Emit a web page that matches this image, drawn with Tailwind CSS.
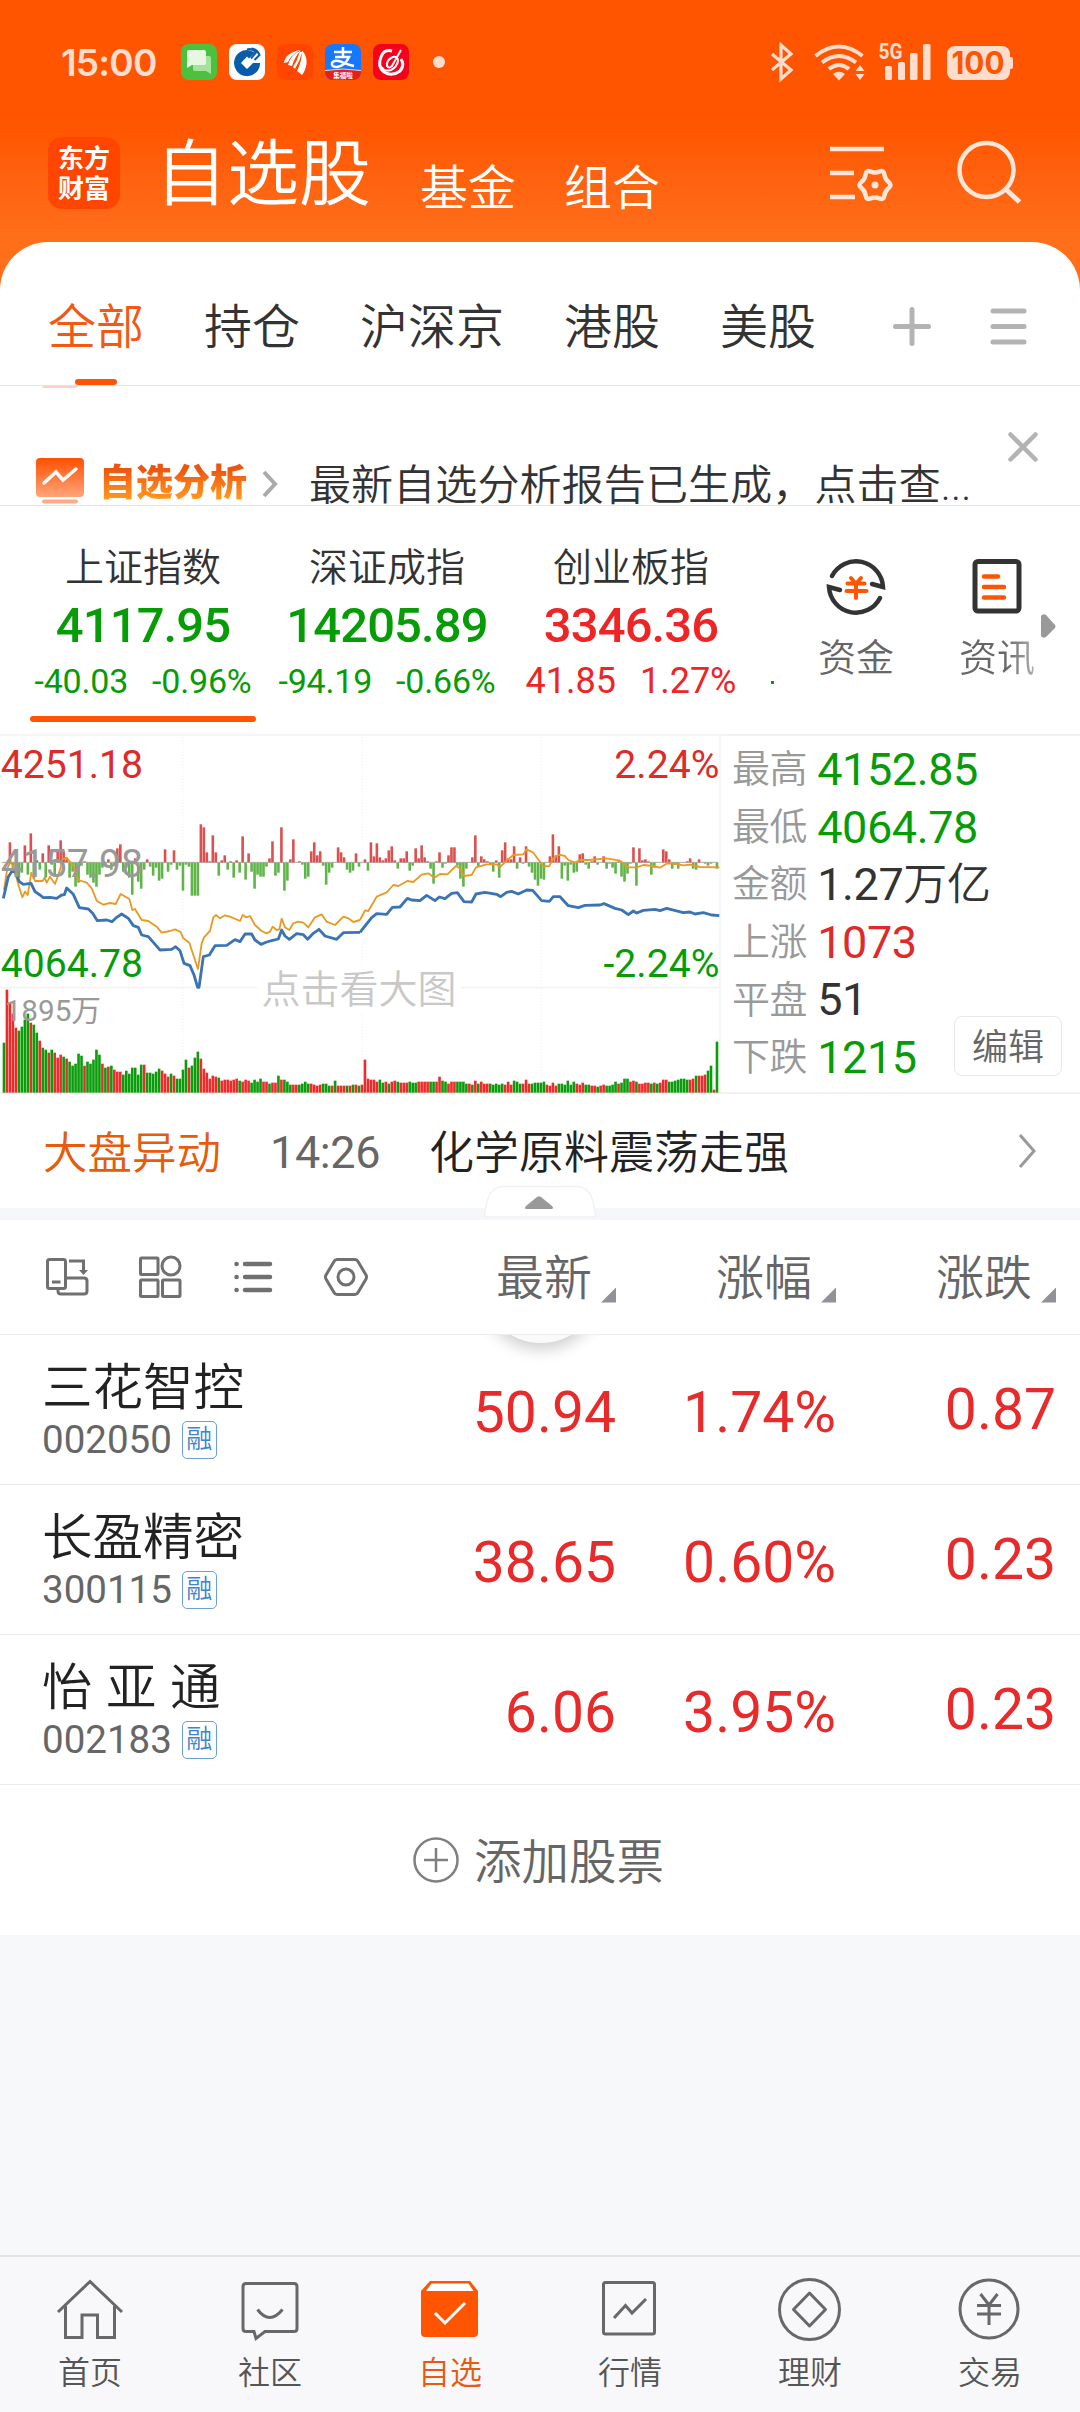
<!DOCTYPE html>
<html lang="zh-CN">
  <head>
    <meta charset="utf-8" />
    <meta name="viewport" content="width=device-width, initial-scale=1" />
    <title>自选股</title>
    <script src="https://cdn.jsdelivr.net/npm/@tailwindcss/browser@4"></script>
  </head>
  <body class="bg-[#f7f8fa]">
    <div
      class="flex h-[2412px] w-[1080px] flex-col overflow-hidden font-[Roboto,'Noto_Sans_CJK_SC',sans-serif] text-[#333]"
    >
      <!-- Header -->
      <header
        class="h-[290px] shrink-0 bg-linear-to-b from-[#ff5500] from-[125px] to-[#ff6f1a] to-[240px]"
      >
        <!-- Status bar -->
        <div class="flex h-[124px] items-center pl-[61px] text-[#ffddcc]">
          <span
            class="w-[120px] font-[Inter,sans-serif] text-[37px] leading-none font-semibold tracking-[-0.8px]"
            >15:00</span
          >
          <div class="flex items-center gap-3">
            <svg class="size-9" viewBox="0 0 36 36">
              <rect width="36" height="36" rx="8" fill="#4cc13f" />
              <path d="M12 12h16a2 2 0 0 1 2 2v16l-5-3H14a2 2 0 0 1-2-2z" fill="#a5e39b" />
              <path d="M8 6h15a2 2 0 0 1 2 2v11a2 2 0 0 1-2 2H11l-5 3V8a2 2 0 0 1 2-2z" fill="#e6f8e2" />
            </svg>
            <svg class="size-9" viewBox="0 0 36 36">
              <rect width="36" height="36" rx="8" fill="#fff" />
              <path d="M21 6.500A13 13 0 1 0 31 19h-7l-6 6-6-6 6-6.500 2 2 6-6z" fill="#0a5cab" />
              <path d="M18 5.500q6-1.500 9 3l-5 6M22.500 4.500q6 1 8 6.500l-5 5" fill="none" stroke="#0a5cab" stroke-width="2" />
            </svg>
            <svg class="size-9" viewBox="0 0 36 36">
              <rect width="36" height="36" rx="8" fill="#ff4500" />
              <path
                d="M7 19Q8 9 23 6Q14 11 11 18zM11 21Q14 10 24 6.500Q18 12 15 22zM20 27Q25 17 25 6.500Q33 15 27 28l-2 3z"
                fill="#fff"
              />
              <path d="M17 24Q22 16 24 8" fill="none" stroke="#fff" stroke-width="2.500" />
            </svg>
            <svg class="size-9" viewBox="0 0 36 36">
              <rect width="36" height="36" rx="8" fill="#1677ff" />
              <path d="M0 27q18-4 36 0v1a8 8 0 0 1-8 8H8a8 8 0 0 1-8-8z" fill="#e3201b" />
              <path d="M0 26.500q18-3 36 0" fill="none" stroke="#ffd9a8" />
              <path d="M9 8h18M18 3v10M10 13h14Q20 22 12 23q-6 0-5-4 2-4 10-1 6 3 12 4" fill="none" stroke="#fff" stroke-width="2.500" />
              <text x="18" y="34" font-size="6.500" font-weight="700" text-anchor="middle" fill="#fff">集福啦</text>
            </svg>
            <svg class="size-9" viewBox="0 0 36 36">
              <rect width="36" height="36" rx="8" fill="#f5001d" />
              <path d="M19 7Q11 5 8 13q-4 9 3 15 8 5 16-1 5-6 1-12" fill="none" stroke="#fff" stroke-width="3" />
              <path d="M28 6 19 22q-3 3-5 0-1-6 6-9 5-1 5 4-1 6-7 9-7 2-9-3" fill="none" stroke="#fff" stroke-width="2" />
            </svg>
          </div>
          <span class="ml-6 size-3 rounded-full bg-[#ffddcc]"></span>
          <svg class="ml-[321px] h-[48px] w-[250px]" viewBox="766 38 250 48" fill="#ffddcc">
            <path d="m772 54 19 16-10 9V45l10 9-19 16" fill="none" stroke="#ffddcc" stroke-width="3.200" />
            <g fill="none" stroke="#ffddcc" stroke-width="4">
              <path d="M815.500 56q23.500-19 47 0M822 62.500q17-13 34 0M829 69q10-8 20 0" />
            </g>
            <path d="M833 74q6-4.500 12 0l-6 6.500zM855.500 71l4.500-6 4.500 6zM855.500 74l4.500 6 4.500-6z" />
            <text x="878.500" y="59" font-family="Roboto" font-size="21.500" font-weight="700" textLength="24" lengthAdjust="spacingAndGlyphs">5G</text>
            <rect x="885" y="66" width="7" height="14" rx="1.500" />
            <rect x="898" y="62" width="7" height="18" rx="1.500" />
            <rect x="910" y="53" width="7.500" height="27" rx="1.500" />
            <rect x="923" y="44" width="7.500" height="36" rx="1.500" />
            <rect x="947" y="46" width="63" height="34" rx="8" />
            <rect x="1005" y="57" width="8" height="12" rx="2" />
            <text x="978" y="74" font-family="Inter" font-size="31" font-weight="700" text-anchor="middle" textLength="53" lengthAdjust="spacingAndGlyphs" fill="#ff5500">100</text>
          </svg>
        </div>
        <!-- App title -->
        <div class="flex h-[98px] items-center pl-12 text-white">
          <div
            class="grid size-[72px] place-content-center rounded-[14px] bg-[#ff4600] pt-[2px] text-center text-[26px] leading-[30px] font-bold"
          >
            <span>东方</span><span>财富</span>
          </div>
          <span class="mt-[4px] ml-[35px] text-[72px] leading-[98px] font-[350]">自选股</span>
          <span class="mt-[31px] ml-[49px] text-[48px] leading-[72px] font-[350]">基金</span>
          <span class="mt-[31px] ml-[48px] text-[48px] leading-[72px] font-[350]">组合</span>
          <svg class="mb-[3px] ml-[166px] h-[66px] w-[200px]" viewBox="827 140 200 66" fill="none" stroke="#ffe6d8" stroke-width="4.500">
            <path d="M831 150h54M831 174h24M831 198h25" />
            <circle cx="876" cy="186" r="3.500" fill="#ffe6d8" stroke="none" />
            <path
              d="M889.700 183.100Q886 180.200 885.400 175.500Q884.800 170.800 880.400 172.600Q876 174.500 871.600 172.600Q867.200 170.800 866.600 175.500Q866 180.200 862.300 183.100Q858.500 186 862.300 188.900Q866 191.800 866.600 196.500Q867.200 201.200 871.600 199.400Q876 197.500 880.400 199.400Q884.800 201.200 885.400 196.500Q886 191.800 889.700 188.900Q893.500 186 889.700 183.100z"
            />
            <circle cx="987.500" cy="171" r="27" />
            <path d="m1006 189.500 14.500 13.500" stroke-width="5" />
          </svg>
        </div>
      </header>

      <main class="relative z-10 -mt-12 rounded-t-[48px] bg-white">
        <!-- Group tabs -->
        <nav
          class="flex h-[144px] items-center border-b border-[#e4e4e4] pt-[29px] pl-12 text-[48px] leading-[72px] font-[350]"
        >
          <div class="flex gap-[60px]">
            <span class="relative text-[#f05a12]"
              >全部<i class="absolute bottom-[-21px] left-[27px] h-[6px] w-[42px] rounded-full bg-[#ff5500]"></i
            ></span>
            <span>持仓</span>
            <span>沪深京</span>
            <span>港股</span>
            <span>美股</span>
          </div>
          <svg class="mb-[5px] ml-[73px] h-[44px] w-[142px]" viewBox="889 303 142 44" fill="none" stroke="#b3b3b3" stroke-width="5" stroke-linecap="round">
            <path d="M895.500 325.500h33M912 308.500v34M993 310h31M993 325.500h31M993 341h31" />
          </svg>
        </nav>

        <!-- Analysis notice -->
        <div class="relative flex h-[120px] items-end border-b border-[#e4e4e4] pl-9">
          <i class="absolute top-0 left-[42px] h-[2px] w-9 rounded-b bg-[#f9cfca]"></i>
          <svg class="h-[47px] w-[48px]" viewBox="36 458 48 47">
            <defs>
              <linearGradient id="badge" x2="0" y2="1">
                <stop offset="0" stop-color="#ff5000" />
                <stop offset="1" stop-color="#ffa57a" />
              </linearGradient>
            </defs>
            <rect x="36" y="458" width="48" height="39" rx="4" fill="url(#badge)" />
            <rect x="42" y="499.500" width="36" height="4" rx="2" fill="#ffab85" />
            <path d="m44 483 12-11 7 8 13-11" fill="none" stroke="#fff" stroke-width="3.500" stroke-linecap="round" />
          </svg>
          <span
            class="-mb-[3px] ml-[15px] bg-linear-to-b from-[#ee5510] from-20% to-[#ff961e] to-80% bg-clip-text text-[37px] leading-[48px] font-black text-transparent"
            >自选分析</span
          >
          <svg class="mb-[6px] ml-[13px] h-[30px] w-[20px]" viewBox="0 0 20 30" fill="none" stroke="#aaa" stroke-width="4">
            <path d="m4 3 11 12L4 27" />
          </svg>
          <span class="-mb-[9px] ml-[29px] w-[664px] text-[42px] leading-[56px] font-[350] tracking-[0.12px]"
            >最新自选分析报告已生成，点击查...</span
          >
          <svg class="mb-[41px] ml-[33px] size-[34px]" viewBox="0 0 34 34" fill="none" stroke="#b3b3b3" stroke-width="4.500" stroke-linecap="round">
            <path d="m4.500 4.500 25 25M29.500 4.500l-25 25" />
          </svg>
        </div>

        <!-- Indices -->
        <div class="flex h-[228px]">
          <div class="flex w-[775px] overflow-hidden pl-[21px] text-center whitespace-nowrap text-[#069c06]">
            <div class="relative w-[244px] shrink-0 pt-[38px]">
              <div class="text-[39px] leading-[48px] font-[350] text-[#333]">上证指数</div>
              <div class="mt-[5px] text-[49px] leading-[58px] font-medium tracking-[-0.9px]">4117.95</div>
              <div class="mt-[4px] text-[34px] leading-[44px] tracking-[-0.2px]">-40.03<span class="ml-6">-0.96%</span></div>
              <i class="absolute bottom-[12px] left-[9px] h-[6px] w-[226px] rounded-full bg-[#ff5500]"></i>
            </div>
            <div class="w-[244px] shrink-0 pt-[38px]">
              <div class="text-[39px] leading-[48px] font-[350] text-[#333]">深证成指</div>
              <div class="mt-[5px] text-[49px] leading-[58px] font-medium tracking-[-0.9px]">14205.89</div>
              <div class="mt-[4px] text-[34px] leading-[44px] tracking-[-0.2px]">-94.19<span class="ml-6">-0.66%</span></div>
            </div>
            <div class="w-[244px] shrink-0 pt-[38px] text-[#ee2525]">
              <div class="text-[39px] leading-[48px] font-[350] text-[#333]">创业板指</div>
              <div class="mt-[5px] text-[49px] leading-[58px] font-medium tracking-[-0.9px]">3346.36</div>
              <div class="mt-[4px] text-[36px] leading-[44px]">41.85<span class="ml-6">1.27%</span></div>
            </div>
            <div class="ml-[18px] pt-[175px]"><div class="size-[3px] bg-[#069c06]"></div></div>
          </div>
          <div class="flex w-[162px] flex-col items-center pt-[48px]">
            <svg class="h-[66px] w-[66px]" viewBox="823 555 66 66" fill="none" stroke="#333" stroke-width="4.500">
              <path d="M832 577a27 27 0 0 1 51 11l-11-3M880 599a27 27 0 0 1-51-11l11 3" stroke-linejoin="miter" stroke-linecap="round" />
              <path d="m851 579 5 6 5-6M847.500 584.500h17M846.500 592h20M856 585v14" stroke="#ff5500" stroke-linecap="round" stroke-width="4" />
            </svg>
            <span class="mt-[13px] text-[38px] leading-[50px] font-[350] text-[#666]">资金</span>
          </div>
          <div class="flex w-[120px] flex-col items-center pt-[48px]">
            <svg class="h-[66px] w-[66px]" viewBox="964 555 66 66" fill="none" stroke="#333" stroke-width="5">
              <rect x="975" y="562.500" width="44" height="49.500" rx="3" />
              <path d="M984 577.500h14M984 588h20M984 598.500h20" stroke="#ff5500" stroke-linecap="round" stroke-width="4.500" />
            </svg>
            <span
              class="mt-[13px] bg-linear-to-r from-[#666] from-60% to-[#b0b0b0] bg-clip-text text-[38px] leading-[50px] font-[350] text-transparent"
              >资讯</span
            >
          </div>
          <svg class="mt-[106px] -ml-[18px] h-[28px] w-[18px]" viewBox="0 0 18 28">
            <path d="M2 4q2-3 5-1l9 10q1 1.500 0 3l-9 9q-3 2-5-1z" fill="#999" />
          </svg>
        </div>

        <!-- Intraday chart -->
        <div class="flex h-[360px] border-b-2 border-[#f2f2f2]">
          <svg class="h-[360px] w-[722px] shrink-0" viewBox="0 12 2166 1080" font-family="Roboto, 'Noto Sans CJK SC'">
            <g stroke="#f3f3f3" stroke-width="5" fill="none">
              <path d="M0 15h2166M2160 12v1080M0 773h772M1383 773h777" />
              <path d="M549 20v1068M1086 20v680M1086 845v243M1623 20v1068" stroke-dasharray="4 5" stroke-width="3.500" />
            </g>
            <path d="M5 397h2150" stroke="#b0a8a8" stroke-width="3" />
            <g id="momentum"></g>
            <g id="volume"></g>
            <g fill="none" stroke="#e99a24" stroke-width="5.500" stroke-linejoin="round">
              <polyline
                points="12,480 22,415 32,395 40,410 57,470 67,502 75,485 83,495 94,428 105,453 128,453 134,443 140,458 150,440 165,462 180,420 187,388 200,383 220,408 235,450 260,458 275,475 290,512 310,524 330,519 347,522 362,492 388,507 397,540 405,537 425,570 445,573 470,590 485,608 510,603 525,598 542,606 550,625 568,638 580,675 594,717 605,640 612,622 630,603 640,562 648,555 660,565 675,556 690,560 720,573 728,555 738,562 750,558 765,585 785,603 800,610 810,605 818,590 830,600 838,598 845,566 855,592 868,600 880,580 895,575 910,578 925,592 945,562 965,553 980,575 1005,585 1030,560 1045,565 1060,576 1080,570"
              />
              <polyline
                transform="translate(1080)"
                points="0,570 15,541 25,543 50,500 80,487 100,465 115,468 142,453 160,456 185,434 205,430 223,443 240,432 262,433 288,408 300,415 312,438 335,435 348,412 380,403 410,403 420,411 440,392 460,375 490,373 500,358 520,368 550,409 568,408 580,385 597,374 615,378 625,390 645,398 660,390 685,390 740,385 780,392 805,412 830,412 850,405 880,408 900,413 922,400 950,402 970,406 990,404 1020,411 1078,412"
              />
            </g>
            <g fill="none" stroke="#3a74b4" stroke-width="8.500" stroke-linejoin="round">
              <polyline
                points="10,505 25,440 35,425 45,425 58,455 70,463 93,460 105,485 120,495 130,503 150,502 170,505 185,495 193,494 200,474 220,493 238,533 265,537 278,550 292,572 320,570 336,575 350,562 365,552 385,565 400,587 415,592 425,615 445,620 460,637 480,660 515,658 527,650 540,662 552,700 570,707 582,735 593,772 597,772 610,680 628,675 645,647 680,646 705,629 720,635 735,612 755,612 765,630 783,643 800,636 815,632 835,627 845,600 855,618 868,628 890,611 910,614 923,628 940,610 957,598 975,618 1010,628 1030,608 1080,607"
              />
              <polyline
                transform="translate(1080)"
                points="0,607 15,588 35,563 50,551 80,553 97,532 120,531 142,505 155,510 180,512 200,496 225,512 238,501 255,506 275,490 292,488 312,515 335,516 348,492 375,487 410,493 422,500 440,487 455,484 475,492 500,480 518,481 545,512 568,514 580,500 600,500 625,527 655,533 675,526 720,525 732,521 765,535 785,540 805,554 820,543 830,549 850,541 885,538 900,542 920,535 970,548 990,546 1005,552 1030,548 1055,555 1078,557"
              />
            </g>
            <g font-size="117.500">
              <text x="2" y="143" fill="#dd2a2a">4251.18</text>
              <text x="2" y="440" fill="#999">4157.98</text>
              <text x="2" y="740" fill="#069c06">4064.78</text>
              <text x="2158" y="143" text-anchor="end" fill="#dd2a2a">2.24%</text>
              <text x="2158" y="740" text-anchor="end" fill="#069c06">-2.24%</text>
            </g>
            <text x="14" y="872" font-size="89" fill="#999">1895万</text>
            <text x="1077" y="818" font-size="117" font-weight="350" text-anchor="middle" fill="#c8c8c8">点击看大图</text>
          </svg>
          <div class="relative w-[358px] border-t-2 border-[#f2f2f2] pt-[5px] pl-[10px]">
            <dl class="text-[45px] tracking-[-0.4px]">
              <div class="flex h-[57.6px] items-center gap-[10px]">
                <dt class="text-[38px] font-[350] text-[#999]">最高</dt>
                <dd class="text-[#069c06]">4152.85</dd>
              </div>
              <div class="flex h-[57.6px] items-center gap-[10px]">
                <dt class="text-[38px] font-[350] text-[#999]">最低</dt>
                <dd class="text-[#069c06]">4064.78</dd>
              </div>
              <div class="flex h-[57.6px] items-center gap-[10px]">
                <dt class="text-[38px] font-[350] text-[#999]">金额</dt>
                <dd>1.27<span class="text-[44px] font-[350]">万亿</span></dd>
              </div>
              <div class="flex h-[57.6px] items-center gap-[10px]">
                <dt class="text-[38px] font-[350] text-[#999]">上涨</dt>
                <dd class="text-[#dd2a2a]">1073</dd>
              </div>
              <div class="flex h-[57.6px] items-center gap-[10px]">
                <dt class="text-[38px] font-[350] text-[#999]">平盘</dt>
                <dd>51</dd>
              </div>
              <div class="flex h-[57.6px] items-center gap-[10px]">
                <dt class="text-[38px] font-[350] text-[#999]">下跌</dt>
                <dd class="text-[#069c06]">1215</dd>
              </div>
            </dl>
            <button
              class="absolute right-[18px] bottom-[16px] h-[60px] w-[108px] rounded-[8px] border border-[#e8e8e8] bg-white pt-[5px] text-[36px] leading-[53px] font-[350] text-[#666]"
            >
              编辑
            </button>
          </div>
        </div>

        <!-- Market movement -->
        <div class="relative flex h-[114px] items-center pl-[43px] text-[45px] leading-[64px]">
          <span class="mt-[5px] w-[227px] text-[44.500px] font-[350] text-[#e65c0c]">大盘异动</span>
          <span class="mt-[3px] w-[159px] tracking-[-0.4px] text-[#666]">14:26</span>
          <span class="mt-[5px] w-[583px] font-[350] text-[#222]">化学原料震荡走强</span>
          <svg class="h-[40px] w-[28px]" viewBox="0 0 28 40" fill="none" stroke="#999" stroke-width="3">
            <path d="m8 4 14 16L8 36" />
          </svg>
          <svg class="absolute top-[90px] left-[482px] z-10 h-[36px] w-[116px]" viewBox="482 1184 116 36">
            <path d="M484.500 1217q2-20 7-25 4-5.500 14-5.500h69q10 0 14 5.500 5 5 7 25z" fill="#fff" stroke="#f1f2f4" stroke-width="1.500" />
            <path d="M526 1209q-2-1 0-3l11-9q2-1.500 4 0l11 9q2 2 0 3h-25z" fill="#999" />
          </svg>
        </div>
        <div class="h-3 bg-[#f5f7fa]"></div>

        <!-- List header -->
        <div class="flex h-[115px] items-center border-b border-[#ececec] bg-white pl-10 text-[48px] leading-[72px] font-[350] text-[#666]">
          <svg class="h-[50px] w-[340px]" viewBox="40 1252 340 50" fill="none" stroke="#707070" stroke-width="3">
            <rect x="47.500" y="1259.500" width="18" height="29" rx="2" />
            <path d="M52 1282h8.500M65.500 1278H84q3 0 3 3v10q0 3-3 3H61q-3 0-3-3v-2.500M69 1261h14.500v11" />
            <path d="M79 1270h9l-4.500 5z" fill="#707070" stroke="none" />
            <rect x="140.500" y="1258" width="17.500" height="16.500" rx="1" />
            <circle cx="171" cy="1266" r="9" />
            <rect x="140.500" y="1280" width="17.500" height="16.500" rx="1" />
            <rect x="162.500" y="1280" width="17.500" height="16.500" rx="1" />
            <path d="M245 1264h25M245 1277h25M245 1290h25M236.500 1264h.1M236.500 1277h.1M236.500 1290h.1" stroke-width="4.500" stroke-linecap="round" />
            <path d="M337 1259.500h18q2 0 3 2l8 13.500q1 2 0 4l-8 13.500q-1 2-3 2h-18q-2 0-3-2l-8-13.500q-1-2 0-4l8-13.500q1-2 3-2z" />
            <circle cx="346" cy="1277" r="8" />
          </svg>
          <div class="flex w-[236px] items-end justify-end gap-[9px] pt-[3px]">
            最新<i class="mb-[12px] size-[15px] bg-[#919197] [clip-path:polygon(100%_0,100%_100%,0_100%)]"></i>
          </div>
          <div class="flex w-[220px] items-end justify-end gap-[9px] pt-[3px]">
            涨幅<i class="mb-[12px] size-[15px] bg-[#919197] [clip-path:polygon(100%_0,100%_100%,0_100%)]"></i>
          </div>
          <div class="flex w-[220px] items-end justify-end gap-[9px] pt-[3px]">
            涨跌<i class="mb-[12px] size-[15px] bg-[#919197] [clip-path:polygon(100%_0,100%_100%,0_100%)]"></i>
          </div>
        </div>

        <!-- Stocks -->
        <div class="relative">
          <div class="pointer-events-none absolute top-0 left-[460px] h-[50px] w-[162px] overflow-hidden">
            <div class="mx-auto -mt-[112px] size-[120px] rounded-full bg-[#fafafa] shadow-[0_6px_16px_rgba(0,0,0,0.2)]"></div>
          </div>
          <div class="flex h-[150px] border-b border-[#ececec] pl-[42px] text-[57px] leading-[68px] text-[#e82a2a]">
            <div class="w-[260px] pt-[20px]">
              <div class="text-[50.500px] leading-[66px] font-[350] text-[#222]">三花智控</div>
              <div class="flex items-center gap-[10px] text-[38.500px] leading-[38px] text-[#666]">
                002050<span class="h-[38px] w-[35px] rounded-[5px] border-[1.500px] border-[#69a0d6] text-center text-[26px] leading-[35px] font-[350] text-[#3d84cb]">融</span>
              </div>
            </div>
            <span class="w-[314px] pt-[44px] text-right">50.94</span>
            <span class="w-[220px] pt-[44px] text-right">1.74%</span>
            <span class="w-[220px] pt-[41px] text-right">0.87</span>
          </div>
          <div class="flex h-[150px] border-b border-[#ececec] pl-[42px] text-[57px] leading-[68px] text-[#e82a2a]">
            <div class="w-[260px] pt-[20px]">
              <div class="text-[50.500px] leading-[66px] font-[350] text-[#222]">长盈精密</div>
              <div class="flex items-center gap-[10px] text-[38.500px] leading-[38px] text-[#666]">
                300115<span class="h-[38px] w-[35px] rounded-[5px] border-[1.500px] border-[#69a0d6] text-center text-[26px] leading-[35px] font-[350] text-[#3d84cb]">融</span>
              </div>
            </div>
            <span class="w-[314px] pt-[44px] text-right">38.65</span>
            <span class="w-[220px] pt-[44px] text-right">0.60%</span>
            <span class="w-[220px] pt-[41px] text-right">0.23</span>
          </div>
          <div class="flex h-[150px] border-b border-[#ececec] pl-[42px] text-[57px] leading-[68px] text-[#e82a2a]">
            <div class="w-[260px] pt-[20px]">
              <div class="text-[50.500px] leading-[66px] font-[350] tracking-[13.5px] text-[#222]">怡亚通</div>
              <div class="flex items-center gap-[10px] text-[38.500px] leading-[38px] text-[#666]">
                002183<span class="h-[38px] w-[35px] rounded-[5px] border-[1.500px] border-[#69a0d6] text-center text-[26px] leading-[35px] font-[350] text-[#3d84cb]">融</span>
              </div>
            </div>
            <span class="w-[314px] pt-[44px] text-right">6.06</span>
            <span class="w-[220px] pt-[44px] text-right">3.95%</span>
            <span class="w-[220px] pt-[41px] text-right">0.23</span>
          </div>
          <div class="flex h-[150px] items-center pl-[413px] text-[47.500px] leading-[72px] font-[350] text-[#666]">
            <svg class="size-[46px]" viewBox="0 0 46 46" fill="none" stroke="#808080" stroke-width="2.500">
              <circle cx="23" cy="23" r="21.500" />
              <path d="M23 11v24M11 23h24" />
            </svg>
            <span class="mt-[6px] ml-[15px]">添加股票</span>
          </div>
        </div>
      </main>

      <!-- Bottom navigation -->
      <footer
        class="mt-auto grid h-[157px] shrink-0 grid-cols-6 border-t-2 border-[#e1e5e8] bg-[#f8f8fb] text-center text-[32px] leading-[44px] font-[350] text-[#555]"
      >
        <div class="flex flex-col items-center pt-[14px]">
          <svg class="h-[76px] w-[76px]" viewBox="52 2271 76 76" fill="none" stroke="#686868" stroke-width="3">
            <path d="m58 2312 32-30.500 32 30.500M65.500 2306v31.500H82V2315h15.500v22.500h17V2306" />
          </svg>
          <span class="mt-[4px]">首页</span>
        </div>
        <div class="flex flex-col items-center pt-[14px]">
          <svg class="h-[76px] w-[76px]" viewBox="232 2271 76 76" fill="none" stroke="#686868" stroke-width="3">
            <path d="M246 2283.500h48q3 0 3 3v42q0 3-3 3h-29l-9 7-2-7h-8q-3 0-3-3v-42q0-3 3-3z" />
            <path d="M257.500 2309.500q12 16 25 0" />
          </svg>
          <span class="mt-[4px]">社区</span>
        </div>
        <div class="flex flex-col items-center pt-[14px] text-[#e85a10]">
          <svg class="h-[76px] w-[76px]" viewBox="412 2271 76 76">
            <path d="M430 2281h40l8 10v42q0 4-4 4h-49q-4 0-4-4v-42z" fill="#ff5500" />
            <path d="M431.500 2283.500h37l5 7.500h-47.500z" fill="#fff" />
            <path d="m435 2313 10 10 20-20" fill="none" stroke="#fff" stroke-width="3" />
          </svg>
          <span class="mt-[4px]">自选</span>
        </div>
        <div class="flex flex-col items-center pt-[14px]">
          <svg class="h-[76px] w-[76px]" viewBox="592 2271 76 76" fill="none" stroke="#686868" stroke-width="3">
            <rect x="603.500" y="2282.500" width="51" height="51.500" rx="2" />
            <path d="m614 2318 11.500-12.500 6.500 7.500 14-14" />
          </svg>
          <span class="mt-[4px]">行情</span>
        </div>
        <div class="flex flex-col items-center pt-[14px]">
          <svg class="h-[76px] w-[76px]" viewBox="772 2271 76 76" fill="none" stroke="#686868" stroke-width="3">
            <circle cx="809.500" cy="2309.500" r="30" />
            <path d="m809.500 2293 16 16.500-16 16.500-16-16.500z" stroke-linejoin="round" />
          </svg>
          <span class="mt-[4px]">理财</span>
        </div>
        <div class="flex flex-col items-center pt-[14px]">
          <svg class="h-[76px] w-[76px]" viewBox="952 2271 76 76" fill="none" stroke="#686868" stroke-width="3">
            <circle cx="989" cy="2309" r="29" />
            <path d="m980.500 2294 8.500 11 8.500-11M977 2305.500h24M977 2314h24M989 2305v20" />
          </svg>
          <span class="mt-[4px]">交易</span>
        </div>
      </footer>
    </div>

    <script>
      // one value per minute: momentum is signed, volume carries its colour
      const momentum = [
        0, 0, 20, -10, -6, -15, -10, 17, -12, 29, -16, 2, -7, 9, -15, 17, -2, -14, 12, 22, 11, 3, -15, -9, -24,
        -20, -3, 1, -12, -15, -20, -24, -12, -5, -2, 3, -7, -3, 14, 18, -9, -5, -15, -32, 4, -19, -26, -7, 3, -4,
        -13, -5, -18, -16, 13, -9, -2, 12, -7, -3, -28, -2, -4, -33, -33, -33, 38, 35, 10, 1, 27, 10, -13, 2, 7,
        -7, 1, -15, 2, -10, 26, -17, 9, -9, -26, -12, -14, -14, -4, 4, 21, -13, -10, 35, -28, -18, 3, 23, 0, 1,
        -2, -16, -14, 11, 20, 7, 11, -3, -22, -10, -5, 0, 15, 10, 5, -7, -10, -8, 9, -4, 0, 3, -8, 20, 6,
        19, 5, 2, 4, 12, 16, 2, -6, 4, 4, 11, -8, -3, 14, 4, 17, 5, 1, -6, -21, 1, 10, -5, -1, 7,
        15, 15, -3, -16, -24, -6, 0, 5, 27, -4, 6, 3, 1, -2, -9, 2, -15, 12, 20, 4, 3, 16, -6, 5, -1,
        16, -4, -10, -17, -23, -16, -17, 0, 6, 28, 7, 16, -16, -3, -18, -2, -10, -9, 8, 9, -2, -6, 1, 6, -2,
        0, 6, -6, -1, -5, -11, 1, -14, -19, -11, -1, 15, -23, 14, 2, 3, 1, -12, -5, 0, 0, 13, 11, 3, -6,
        -2, -6, 0, 0, 1, 4, -6, -7, 3, 0, -1, -3, -1, 0, -6,
      ];
      const volume =
        "g50 r103 r90 r79 r65 g62 g66 g73 g79 r70 g68 g60 r52 g45 g43 r40 g43 r40 r35 r38 g36 r34 g31 g27 g29 g39 g37 r27 g31 g29 g33 g43 g38 r29 g25 r26 g27 r23 r21 r21 g18 g22 g19 g25 g25 g18 g28 r28 g20 g20 g19 g21 g24 r22 r19 r16 g19 r17 g14 g14 g23 g33 r25 g27 g35 g41 r34 r24 r20 r14 r17 r16 g15 r12 r13 r13 r12 r13 r14 g12 r11 r13 r12 g10 g13 g11 g14 r11 r11 g9 r10 r10 g17 r13 g13 g11 g8 r8 r8 g8 g9 g11 g9 r9 r8 r7 r8 g9 g9 g7 r7 g12 r7 r7 r7 g7 r7 g8 r8 g7 r8 " +
        "r33 r14 r13 r13 r11 g13 g10 r11 g9 r11 r12 g11 r10 r10 r10 g11 g10 g10 r11 r11 r11 r11 g11 g11 r11 r16 g12 g11 r9 r11 r11 g11 g11 g11 g9 r9 g8 r12 g9 r11 r9 r9 g9 g8 g9 g8 g9 r8 r11 r8 g12 g11 g9 r9 r13 r9 g9 g10 g10 g10 g11 r8 r7 r10 r7 g9 g9 g8 g12 g8 g11 r9 r8 r10 g8 g8 r7 r7 g6 r7 r8 g7 g7 g8 g11 r9 g10 g14 g14 r11 r12 g11 r9 r9 r10 r10 g9 r10 g9 r10 r13 r13 g11 g11 g12 g13 g14 g14 g13 r13 r14 g17 r17 r17 r18 g22 g27 r3 g51";

      function bar(x, y, height, color) {
        const rect = document.createElementNS("http://www.w3.org/2000/svg", "rect");
        rect.setAttribute("x", x);
        rect.setAttribute("y", y);
        rect.setAttribute("width", 7.8);
        rect.setAttribute("height", height);
        rect.setAttribute("fill", color);
        return rect;
      }

      const step = 8.95;
      momentum.forEach((value, i) => {
        const height = Math.abs(value) * 3;
        const node = bar(8 + i * step, value > 0 ? 397 - height : 398, height, value > 0 ? "#dc5050" : "#5fb548");
        document.getElementById("momentum").append(node);
      });
      volume.split(" ").forEach((item, i) => {
        const height = Number(item.slice(1)) * 3;
        const node = bar(8 + i * step, 1088 - height, height, item[0] === "r" ? "#ee2a2a" : "#0a9c0a");
        document.getElementById("volume").append(node);
      });
    </script>
  </body>
</html>
